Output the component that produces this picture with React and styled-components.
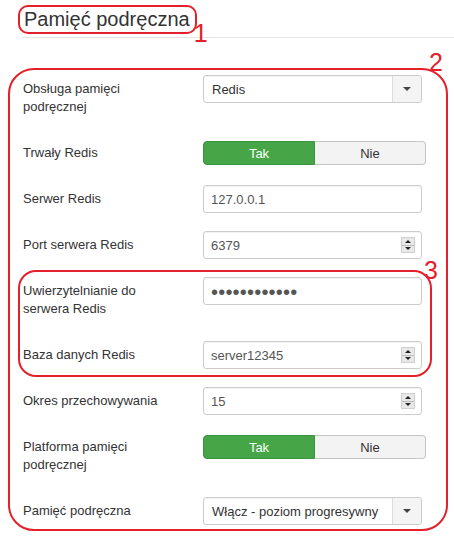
import React from 'react'
import styled, { createGlobalStyle } from 'styled-components'

const GlobalStyle = createGlobalStyle`
  body {
    margin: 0;
    background: #fff;
    font-family: 'Liberation Sans', Arial, sans-serif;
    color: #333;
  }
`

const RED = '#e4202a'

const Page = styled.div`
  width: 454px;
  height: 540px;
  padding-top: 5px;
  box-sizing: border-box;
  overflow: hidden;
`

const Header = styled.div`
  margin-left: 23px;
  padding-bottom: 3px;
  border-bottom: 1px solid #e5e5e5;
  display: flex;
`

const TitleBox = styled.div`
  position: relative;
  margin-left: -5px;
  padding: 0 5px 0 4px;
  border: 2px solid ${RED};
  border-radius: 10px;
  font-size: 20px;
  line-height: 25px;
  color: #333;
`

const Mark = styled.span`
  position: absolute;
  font-size: 25px;
  line-height: 1;
  color: ${RED};
  left: ${p => p.$left};
  right: ${p => p.$right};
  top: ${p => p.$top};
`

const Outline = styled.div`
  position: relative;
  border: 2px solid ${RED};
  border-radius: ${p => p.$radius}px;
`

const MainBox = styled(Outline)`
  margin: 30px 6px 0 8px;
  padding: 5px 20px 4px 13px;
`

const InnerBox = styled(Outline)`
  margin: -7px -6px 10px -5px;
  padding: 5px 0 6px 3px;
`

const Row = styled.div`
  display: flex;
  margin-bottom: 18px;
  &:last-child {
    margin-bottom: 0;
  }
`

const Label = styled.div`
  width: 160px;
  margin-right: 20px;
  padding: 5px 0;
  font-size: 13px;
  line-height: 18px;
  color: #333;
`

const Field = styled.div`
  width: 219px;
  height: 28px;
  box-sizing: border-box;
  display: flex;
  align-items: center;
  border: 1px solid #ccc;
  border-radius: 3px;
  box-shadow: inset 0 1px 1px rgba(0, 0, 0, 0.05);
  background: #fff;
  font-size: 13px;
  color: #555;
  padding-left: ${p => (p.$select ? 8 : 7)}px;
`

const Value = styled.span`
  flex: 1;
  white-space: nowrap;
  color: ${p => (p.$dark ? '#333' : '#555')};
`

const Dots = styled.span`
  flex: 1;
  font-size: 20px;
  letter-spacing: 0.2px;
  color: #555;
  line-height: 1;
  margin-top: 1px;
`

const SelectButton = styled.div`
  width: 28px;
  height: 100%;
  border-left: 1px solid #ddd;
  background: #f4f4f4;
  border-radius: 0 3px 3px 0;
  display: flex;
  align-items: center;
  justify-content: center;
`

const Arrow = styled.span`
  width: 0;
  height: 0;
  border-left: 4px solid transparent;
  border-right: 4px solid transparent;
  border-top: 4px solid #444;
`

const Spinner = styled.div`
  width: 14px;
  height: 16px;
  margin-right: 6px;
  display: flex;
  flex-direction: column;
  background: #e8e8e8;
  border: 1px solid #d0d0d0;
  box-sizing: border-box;
`

const SpinHalf = styled.div`
  flex: 1;
  display: flex;
  align-items: center;
  justify-content: center;
  border-top: ${p => (p.$down ? '1px solid #bbb' : 'none')};
  &::after {
    content: '';
    border-left: 3px solid transparent;
    border-right: 3px solid transparent;
    ${p => (p.$down ? 'border-top: 3px solid #222;' : 'border-bottom: 3px solid #222;')}
  }
`

const ToggleArea = styled.div`
  height: 28px;
  display: flex;
  align-items: center;
`

const Toggle = styled.div`
  width: 223px;
  height: 24px;
  display: flex;
`

const ToggleButton = styled.div`
  flex: 1;
  display: flex;
  align-items: center;
  justify-content: center;
  font-size: 13px;
  box-sizing: border-box;
  color: ${p => (p.$active ? '#fff' : '#333')};
  background: ${p => (p.$active ? '#46a546' : '#f3f3f3')};
  border: 1px solid ${p => (p.$active ? '#3d933d' : '#c6c6c6')};
  border-radius: ${p => (p.$active ? '4px 0 0 4px' : '0 4px 4px 0')};
  ${p => (!p.$active ? 'border-left: none;' : '')}
`

const TextRow = ({ label, value }) => (
  <Row>
    <Label>{label}</Label>
    <Field>
      <Value>{value}</Value>
    </Field>
  </Row>
)

const NumberRow = ({ label, value }) => (
  <Row>
    <Label>{label}</Label>
    <Field>
      <Value>{value}</Value>
      <Spinner>
        <SpinHalf />
        <SpinHalf $down />
      </Spinner>
    </Field>
  </Row>
)

const SelectRow = ({ label, value }) => (
  <Row>
    <Label>{label}</Label>
    <Field $select>
      <Value $dark>{value}</Value>
      <SelectButton>
        <Arrow />
      </SelectButton>
    </Field>
  </Row>
)

const ToggleRow = ({ label }) => (
  <Row>
    <Label>{label}</Label>
    <ToggleArea>
      <Toggle>
        <ToggleButton $active>Tak</ToggleButton>
        <ToggleButton>Nie</ToggleButton>
      </Toggle>
    </ToggleArea>
  </Row>
)

const App = () => (
  <Page>
    <GlobalStyle />
    <Header>
      <TitleBox>
        Pamięć podręczna
        <Mark $left="calc(100% - 1px)" $top="14px">1</Mark>
      </TitleBox>
    </Header>
    <MainBox $radius={26}>
      <Mark $right="3px" $top="-20px">2</Mark>
      <SelectRow label="Obsługa pamięci podręcznej" value="Redis" />
      <ToggleRow label="Trwały Redis" />
      <TextRow label="Serwer Redis" value="127.0.0.1" />
      <NumberRow label="Port serwera Redis" value="6379" />
      <InnerBox $radius={18}>
        <Mark $right="-8px" $top="-14px">3</Mark>
        <Row>
          <Label>Uwierzytelnianie do serwera Redis</Label>
          <Field>
            <Dots>••••••••••••</Dots>
          </Field>
        </Row>
        <NumberRow label="Baza danych Redis" value="server12345" />
      </InnerBox>
      <NumberRow label="Okres przechowywania" value="15" />
      <ToggleRow label="Platforma pamięci podręcznej" />
      <SelectRow label="Pamięć podręczna" value="Włącz - poziom progresywny" />
    </MainBox>
  </Page>
)

export default App
